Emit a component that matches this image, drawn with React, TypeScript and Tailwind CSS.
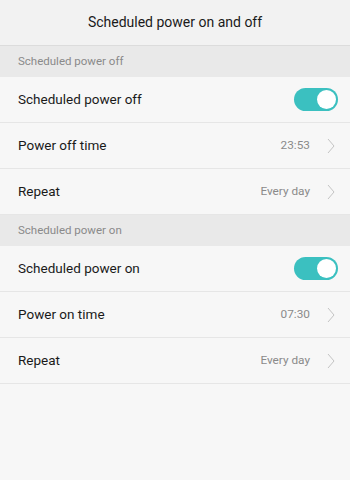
const font = { fontFamily: "Roboto, 'Noto Sans', sans-serif" };

function Toggle() {
  return (
    <div className="w-[44px] h-[23px] rounded-full bg-[#3bc0c0] flex items-center justify-end pr-[2px]">
      <div className="w-[19px] h-[19px] rounded-full bg-white" />
    </div>
  );
}

function Chevron() {
  return (
    <svg width="8" height="16" viewBox="0 0 8 16" className="ml-[17px]">
      <path d="M1 1 L7 8 L1 15" fill="none" stroke="#c4c4c4" strokeWidth="1" />
    </svg>
  );
}

function SectionHeader({ label }: { label: string }) {
  return (
    <div className="h-[31px] bg-[#e9e9e9] flex items-center pl-[18px] text-[11.5px] text-[#8a8a8a]">
      {label}
    </div>
  );
}

function Row({ label, value, toggle }: { label: string; value?: string; toggle?: boolean }) {
  return (
    <div className="h-[46px] flex items-center justify-between pl-[18px] pr-[12px] border-b border-[#e6e6e6] bg-[#f7f7f7]">
      <span className="text-[13.5px] text-[#1a1a1a]">{label}</span>
      {toggle ? (
        <Toggle />
      ) : (
        <div className="flex items-center pr-[3px]">
          <span className="text-[11.8px] text-[#8a8a8a]">{value}</span>
          <Chevron />
        </div>
      )}
    </div>
  );
}

export default function App() {
  return (
    <div className="w-[350px] h-[480px] bg-[#f7f7f7] overflow-hidden" style={font}>
      <div className="h-[46px] bg-[#f2f2f2] border-b border-[#dcdcdc] flex items-center justify-center text-[14px] text-[#1a1a1a]">
        Scheduled power on and off
      </div>
      <SectionHeader label="Scheduled power off" />
      <Row label="Scheduled power off" toggle />
      <Row label="Power off time" value="23:53" />
      <Row label="Repeat" value="Every day" />
      <SectionHeader label="Scheduled power on" />
      <Row label="Scheduled power on" toggle />
      <Row label="Power on time" value="07:30" />
      <Row label="Repeat" value="Every day" />
    </div>
  );
}
